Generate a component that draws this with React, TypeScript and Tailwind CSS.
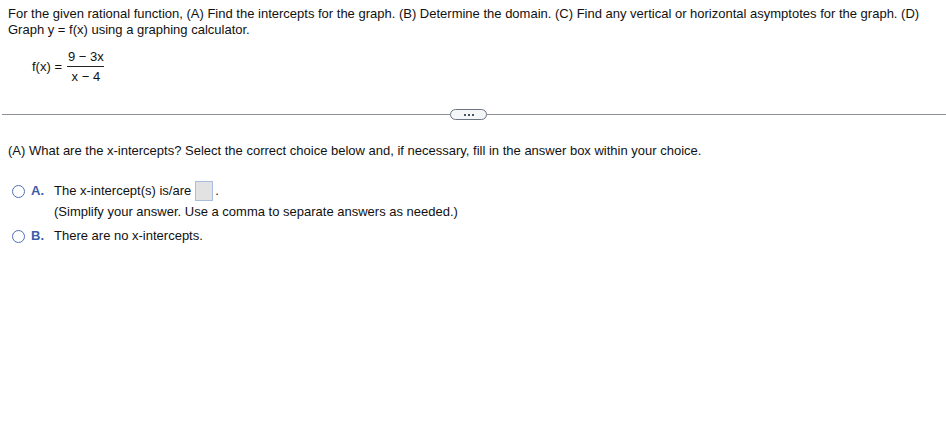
import React from 'react';

function Radio() {
    return (
        <span className="inline-block w-[13px] h-[13px] rounded-full border border-[#4f6fbf] bg-white shrink-0" />
    );
}

export default function App() {
    return (
        <div className="w-[946px] h-[423px] bg-white text-[13px] leading-[16px] text-[#111] font-['Liberation_Sans',Arial,sans-serif] overflow-hidden">
            <div className="px-2 pt-[6px]">
                <p>
                    For the given rational function, (A) Find the intercepts for the graph. (B) Determine the domain. (C) Find any vertical or horizontal asymptotes for the graph. (D) Graph y = f(x) using a graphing calculator.
                </p>
                <div className="flex items-center ml-6 mt-[11px]">
                    <span>f(x) =</span>
                    <div className="flex flex-col items-center ml-[3px]">
                        <span className="px-[3px] leading-[16px]">9 − 3x</span>
                        <span className="h-px w-[37px] bg-[#222] mt-px" />
                        <span className="px-[3px] leading-[16px] mt-[2px]">x − 4</span>
                    </div>
                </div>
            </div>

            <div className="flex items-center mt-[24px] pl-[2px]">
                <div className="w-[448px] h-px bg-[#8b9099]" />
                <div className="flex items-center justify-center gap-[2px] w-[37px] h-[11px] rounded-full border border-[#6b7480] bg-[#f4f6f8]">
                    <span className="w-[2px] h-[2px] bg-[#4a5360]" />
                    <span className="w-[2px] h-[2px] bg-[#4a5360]" />
                    <span className="w-[2px] h-[2px] bg-[#4a5360]" />
                </div>
                <div className="flex-1 h-px bg-[#8b9099]" />
            </div>

            <div className="px-2 mt-[23px]">
                <p>(A) What are the x-intercepts? Select the correct choice below and, if necessary, fill in the answer box within your choice.</p>

                <div className="mt-[22px] flex flex-col gap-[6px]">
                    <div className="flex items-start">
                        <div className="flex items-center h-[20px] ml-[4px]">
                            <Radio />
                            <span className="ml-[6px] font-bold text-[#3b5ca8] w-[18px]">A.</span>
                        </div>
                        <div className="flex flex-col ml-[5px]">
                            <div className="flex items-center h-[20px]">
                                <span>The x-intercept(s) is/are</span>
                                <span className="inline-block w-[18px] h-[20px] ml-[4px] bg-[#e2e2e2] border border-[#a9bde0]" />
                                <span className="ml-[2px]">.</span>
                            </div>
                            <span className="mt-[3px]">(Simplify your answer. Use a comma to separate answers as needed.)</span>
                        </div>
                    </div>
                    <div className="flex items-center">
                        <div className="flex items-center h-[20px] ml-[4px]">
                            <Radio />
                            <span className="ml-[6px] font-bold text-[#3b5ca8] w-[18px]">B.</span>
                        </div>
                        <span className="ml-[5px]">There are no x-intercepts.</span>
                    </div>
                </div>
            </div>
        </div>
    );
}
